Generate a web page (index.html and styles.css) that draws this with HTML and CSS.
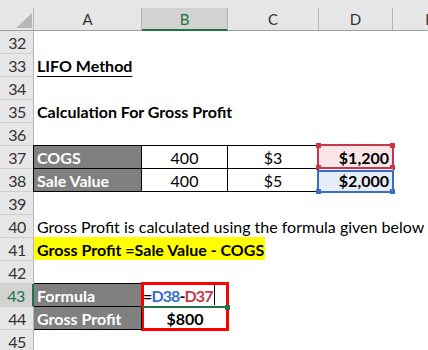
FILE: index.html
```html
<!DOCTYPE html>
<html>
<head>
<meta charset="utf-8">
<link rel="stylesheet" href="styles.css">
</head>
<body>
<div class="sheet">
  <div class="hd corner"><span><i class="tri"></i></span></div>
  <div class="hd"><span>A</span></div>
  <div class="hd sel"><span>B</span></div>
  <div class="hd"><span>C</span></div>
  <div class="hd"><span>D</span></div>
  <div class="hd"><span>E</span></div>

  <div class="rn">32</div><div class="c wide"></div>
  <div class="rn">33</div><div class="c wide"><b class="ul">LIFO Method</b></div>
  <div class="rn">34</div><div class="c wide"></div>
  <div class="rn">35</div><div class="c wide"><b>Calculation For Gross Profit</b></div>
  <div class="rn">36</div><div class="c wide"></div>

  <div class="rn">37</div>
  <div class="c dark bd top left">COGS</div>
  <div class="c mid bd top">400</div>
  <div class="c mid bd top">$3</div>
  <div class="c right bold pink">$1,200<div class="rf red"><i class="h tl"></i><i class="h tr"></i><i class="h bl"></i><i class="h br"></i></div></div>
  <div class="c"></div>

  <div class="rn">38</div>
  <div class="c dark bd left">Sale Value</div>
  <div class="c mid bd">400</div>
  <div class="c mid bd">$5</div>
  <div class="c right bold blue">$2,000<div class="rf bluebox"><i class="h bl"></i><i class="h br"></i></div></div>
  <div class="c"></div>

  <div class="rn">39</div><div class="c wide"></div>
  <div class="rn">40</div><div class="c wide">Gross Profit is calculated using the formula given below</div>
  <div class="rn">41</div><div class="c wide flat"><b class="hl">Gross Profit =Sale Value - COGS</b></div>
  <div class="rn">42</div><div class="c wide"></div>

  <div class="rn rsel">43</div>
  <div class="c dark bd top">Formula</div>
  <div class="c formula bold"><span>=</span><span class="rb">D38</span><span>-</span><span class="rr">D37</span><span class="caret"></span><div class="redbox"></div><div class="active"></div><div class="fill"></div></div>
  <div class="c span3"></div>

  <div class="rn">44</div>
  <div class="c dark bd">Gross Profit</div>
  <div class="c mid bold">$800</div>
  <div class="c span3"></div>

  <div class="rn">45</div><div class="c wide"></div>
</div>
</body>
</html>
```

FILE: styles.css
```css
html, body {
  margin: 0;
  padding: 0;
  overflow: hidden;
  background: #fff;
}
body {
  font-family: Lato, "Open Sans", sans-serif;
  font-size: 16px;
  color: #000;
}
.sheet {
  display: grid;
  grid-template-columns: 34px 108px 86px 91px 74px 74px;
  grid-template-rows: 31px;
  grid-auto-rows: 23px;
  width: 467px;
}
.hd {
  background: #e6e6e6;
  border-bottom: 1px solid #a0a0a0;
  display: flex;
  align-items: flex-end;
  box-sizing: border-box;
}
.hd > span {
  flex: 1;
  height: 22px;
  border-right: 1px solid #b6b6b6;
  display: flex;
  align-items: center;
  justify-content: center;
  font-size: 15px;
  color: #333;
}
.corner > span {
  align-items: flex-end;
  justify-content: flex-end;
  padding: 0 1px 2px 0;
  box-sizing: border-box;
}
.tri {
  width: 0;
  height: 0;
  border-left: 16px solid transparent;
  border-bottom: 15px solid #b7b7b7;
}
.hd.sel {
  border-bottom-color: #217346;
}
.hd.sel > span {
  background: #d2d2d2;
  color: #217346;
  box-shadow: inset 0 -1px 0 #217346;
}
.rn {
  background: #e6e6e6;
  border-right: 1px solid #b6b6b6;
  border-bottom: 1px solid #cfcfcf;
  box-sizing: border-box;
  text-align: right;
  padding: 2px 7px 0 0;
  line-height: 19px;
  color: #333;
  letter-spacing: -0.4px;
}
.rn.rsel {
  background: #d2d2d2;
  color: #217346;
  border-right: 2px solid #217346;
}
.c {
  box-sizing: border-box;
  padding: 2px 3px 0;
  line-height: 19px;
  white-space: nowrap;
  position: relative;
}
.wide {
  grid-column: 2 / -1;
}
.span3 {
  grid-column: 4 / -1;
}
.ul {
  text-decoration: underline;
  text-underline-offset: 4px;
  text-decoration-thickness: 1px;
}
.bold {
  font-weight: 700;
}
.mid {
  text-align: center;
}
.right {
  text-align: right;
  padding-right: 4px;
}
.dark {
  background: #808080;
  color: #fff;
  font-weight: 700;
}
.bd {
  border-right: 1px solid #000;
  border-bottom: 1px solid #000;
}
.bd.top {
  box-shadow: 0 -1px 0 #000;
}
.bd.left {
  box-shadow: -1px 0 0 #000;
}
.bd.top.left {
  box-shadow: 0 -1px 0 #000, -1px 0 0 #000, -1px -1px 0 #000;
}
.pink {
  background: #f9e5e7;
}
.blue {
  background: #e6edf8;
}
.rf {
  position: absolute;
  left: -2px;
  width: 77px;
  box-sizing: border-box;
  border: 2px solid;
}
.red {
  top: -2px;
  height: 25px;
  border-color: #c4384a;
  color: #c4384a;
}
.bluebox {
  top: 1px;
  height: 23px;
  border-color: #3a6fc9;
  color: #3a6fc9;
}
.h {
  position: absolute;
  width: 5px;
  height: 5px;
  background: currentColor;
}
.h.tl { left: -3px; top: -3px; }
.h.tr { right: -3px; top: -3px; }
.h.bl { left: -3px; bottom: -3px; }
.h.br { right: -3px; bottom: -3px; }
.flat {
  padding: 0;
}
.hl {
  display: block;
  width: 231px;
  height: 22px;
  box-sizing: border-box;
  padding: 2px 3px 0;
  background: #ffff00;
  box-shadow: 0 -1px 0 #ffff00;
}
.formula {
  padding-left: 1px;
  display: flex;
  align-items: flex-start;
  letter-spacing: -0.9px;
}
.rb { color: #3a6fc9; }
.rr { color: #c4384a; }
.caret {
  display: block;
  width: 0;
  height: 22px;
  margin-top: -3px;
  margin-left: 1px;
  border-left: 1px solid #000;
}
.redbox {
  position: absolute;
  left: -1px;
  top: -2px;
  width: 88px;
  height: 49px;
  box-sizing: border-box;
  border: 3px solid #ff0000;
}
.active {
  position: absolute;
  left: 0;
  top: 22px;
  width: 85px;
  height: 2px;
  background: #217346;
}
.fill {
  position: absolute;
  left: 83px;
  top: 21px;
  width: 5px;
  height: 5px;
  background: #217346;
}
```
